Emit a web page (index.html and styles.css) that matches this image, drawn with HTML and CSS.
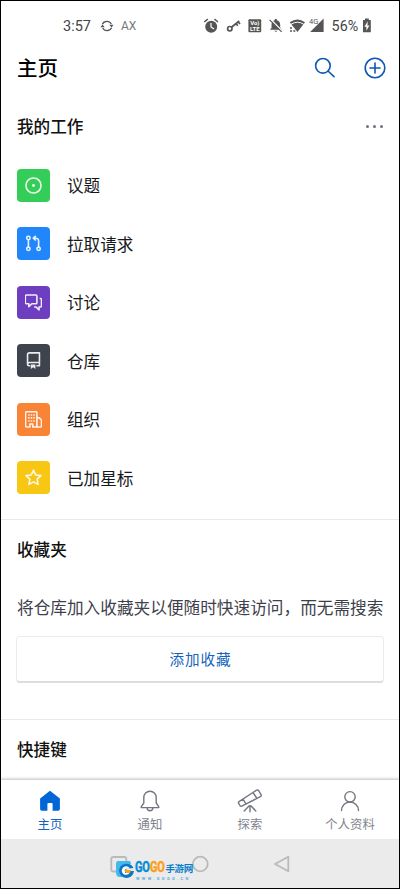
FILE: index.html
```html
<!DOCTYPE html>
<html lang="zh-CN">
<head>
<meta charset="utf-8">
<title>主页</title>
<link rel="stylesheet" href="styles.css">
</head>
<body>
<div class="phone">
  <div class="status">
    <span class="time">3:57</span>
    <svg class="sync" width="14" height="12" viewBox="0 0 14 12"><path d="M2.4 4.2A5 5 0 0 1 11.3 4M11.6 7.8A5 5 0 0 1 2.7 8" fill="none" stroke="#555" stroke-width="1.3"/><path d="M9.2 4.8h4.3L11.7 7.4zM.4 7.2h4.3L2.5 4.6z" fill="#555"/></svg>
    <span class="ax">AX</span>
    <svg class="sys" width="168" height="20" viewBox="204 16 168 20" fill="#555">
      <circle cx="211.2" cy="26.7" r="6"/><path d="M204.3 22l3.5-2.9M218 22l-3.5-2.9" stroke="#555" stroke-width="1.4"/><path d="M211 23v4l3 2" fill="none" stroke="#fff" stroke-width="1.2"/>
      <circle cx="229.8" cy="28.7" r="2.2" fill="none" stroke="#555" stroke-width="1.7"/><path d="M231.5 27.2l7.7-6.2M236 23.6l1.8 2.2M238.2 21.8l1.8 2.2" fill="none" stroke="#555" stroke-width="1.8"/>
      <rect x="248.4" y="19.2" width="12.8" height="13" rx="1"/>
      <text x="254.8" y="25.4" class="lte">Vo)</text><text x="254.8" y="31.3" class="lte">LTE</text>
      <path d="M269.8 29.7l1.7-1.7v-3.2c0-2.6 1.4-4 3.3-4.5v-1.2h2v1.2c2 .5 3.4 2.1 3.4 4.5V28l1.7 1.7zM274.3 30.7h3.2q-1.6 2.2-3.2 0z"/><path d="M270.6 19.2l11.5 11.8" stroke="#fff" stroke-width="1.4"/><path d="M269.6 19.9l12 12" stroke="#555" stroke-width="1.2"/>
      <path d="M289.7 22.3q7.8-5.6 15.3 0l-7.5 9.6z"/><path d="M291 24.3q6.5-4.2 12.8 0" fill="none" stroke="#fff" stroke-width="1"/><path d="M290 27.3h2v1.5h-2zM290 30.2h2v1.5h-2zM293.3 30.2h2v1.5h-2z"/>
      <path d="M323.6 18.5v13.6h-13.5z"/><text x="309" y="24" class="g4">4G</text>
      <text x="331.6" y="30.8" class="batt">56%</text>
      <path d="M363 20h2v-1.6h3.8V20h2v12.2H363z"/><path d="M367.8 21.3l-3.4 5.4h2v4.1l3-5.4h-2z" fill="#fff"/>
    </svg>
  </div>
  <header class="head">
    <h1>主页</h1>
    <svg class="search" width="22" height="22" viewBox="0 0 22 22"><circle cx="8.9" cy="8.8" r="7.3"/><path d="M14 14l6 5.7"/></svg>
    <svg class="plus" width="22" height="22" viewBox="0 0 22 22"><circle cx="11" cy="11" r="9.8"/><path d="M11 6v10M6 11h10"/></svg>
  </header>
  <main>
    <section class="work">
      <div class="title"><h2>我的工作</h2><span class="dots"><i></i><i></i><i></i></span></div>
      <ul>
        <li><span class="tile green"><svg viewBox="0 0 16 16"><circle cx="8" cy="8" r="7.1"/><circle cx="8" cy="8" r="1.4" class="solid"/></svg></span>议题</li>
        <li><span class="tile blue"><svg viewBox="0 0 16 16"><circle cx="3.2" cy="2.8" r="1.6"/><circle cx="3.2" cy="13" r="1.6"/><circle cx="12.8" cy="13" r="1.6"/><path d="M3.2 4.4v7M12.8 11.4V5.5a2.5 2.5 0 0 0-2.5-2.5H8M10.2.8L7.8 3l2.4 2.2"/></svg></span>拉取请求</li>
        <li><span class="tile purple"><svg viewBox="0 0 16 16"><path d="M1.3 1h8.9a1 1 0 0 1 1 1v6.2a1 1 0 0 1-1 1H6.4L3.6 12V9.2H1.3a1 1 0 0 1-1-1V2a1 1 0 0 1 1-1zM13.8 4.2h.7a1 1 0 0 1 1 1v6a1 1 0 0 1-1 1h-1.3V15l-2.8-2.8H8.6"/></svg></span>讨论</li>
        <li><span class="tile dark"><svg viewBox="0 0 16 16"><path d="M5 13H3.8A1.5 1.5 0 0 1 2.4 11.5V2.6A1.8 1.8 0 0 1 4.2.8h9.4V13h-2.8M2.5 11.3a1.7 1.7 0 0 1 1.7-1.4h9.2"/><path d="M5.5 11.7h4.3V16l-2.1-1.6L5.5 16z" class="solid"/></svg></span>仓库</li>
        <li><span class="tile orange"><svg viewBox="0 0 16 16"><path d="M4.6 15H1.5a1 1 0 0 1-1-1V1.7a1 1 0 0 1 1-1h8.7a1 1 0 0 1 1 1V15H7.3v-2.8H4.6zM11.2 6.5h2.3l2 2V14a1 1 0 0 1-1 1h-3.3"/><path d="M3 3.7h1.4M5.4 3.7h1.4M7.8 3.7h1.4M3 6.5h1.4M5.4 6.5h1.4M7.8 6.5h1.4M3 9.4h1.4M5.4 9.4h1.4M7.8 9.4h1.4"/></svg></span>组织</li>
        <li><span class="tile yellow"><svg viewBox="0 0 16 16"><path d="M8 1.1l2.1 4.5 4.9.6-3.6 3.4.9 4.9L8 12.1l-4.3 2.4.9-4.9L1 6.2l4.9-.6z"/></svg></span>已加星标</li>
      </ul>
    </section>
    <section class="favs">
      <div class="title"><h2>收藏夹</h2></div>
      <p>将仓库加入收藏夹以便随时快速访问，而无需搜索</p>
      <button>添加收藏</button>
    </section>
    <section class="keys"><div class="title"><h2>快捷键</h2></div></section>
  </main>
  <nav class="tabs">
    <a class="on"><svg viewBox="0 0 24 24"><path d="M12 1.7L2.1 9.6V20q0 1.7 1.7 1.7h5.6v-6.8q0-1 1-1h3.2q1 0 1 1v6.8h5.6q1.7 0 1.7-1.7V9.6z" class="home"/></svg><span>主页</span></a>
    <a><svg viewBox="0 0 24 24"><path d="M3.3 17.6L5.8 14V8.5a6.2 6.2 0 0 1 12.4 0V14l2.5 3.6c.4.6.1 1-.6 1H3.9c-.7 0-1-.4-.6-1zM9.2 19a2.8 2.8 0 0 0 5.6 0"/></svg><span>通知</span></a>
    <a><svg viewBox="0 0 24 24"><path d="M1 12.7L18.5 1.2q1.4-.8 2.2.5l2.3 4q.7 1.3-.7 2L3.8 17.2q-1.2.5-1.9-.7L.6 14.2q-.5-.9.4-1.5zM15 3.5l4 6M5 10.2l3 4.8M12 17v5.8M11.2 16.7l-5 5.2M12.8 16.7l5 5.2"/></svg><span>探索</span></a>
    <a><svg viewBox="0 0 24 24"><circle cx="12" cy="7.8" r="5.2"/><path d="M3.5 21.5a8.5 8.5 0 0 1 17 0"/></svg><span>个人资料</span></a>
  </nav>
  <div class="sysnav">
    <svg class="navicons" width="398" height="49" viewBox="1 839 398 49"><rect x="111.3" y="857" width="15" height="14.5" rx="2"/><circle cx="200.3" cy="864" r="7.4"/><path d="M275 864l13.3-7.3v14.6z"/></svg>
    <div class="brand">
      <svg width="20" height="19" viewBox="0 0 20 19"><path d="M3 1h12q1 1 1 3L9 5Q4 8 5 13t7 4H5q-4 0-4-4V4q0-3 2-3z" fill="#45b9ed"/><path d="M18.5 8Q16 3 10 4T4 11q1 7 8 7 6-1 7-7h-7l-2-2z" fill="#0878c8"/><path d="M15 8.6q-3-4-7-1-3 4 1 7 4 1 6-2l-5 .5V9z" fill="#fff"/><path d="M9 10h7l-1 3h-4z" fill="#ffa41b"/></svg>
      <div class="words"><div class="name"><b class="go">GO</b><b class="go2">GO</b><b class="cn">手游网</b></div><div class="url">WWW.GOGO.CN</div></div>
    </div>
  </div>
</div>
</body>
</html>
```
FILE: styles.css
```css
* { box-sizing: border-box; margin: 0; padding: 0; }
body {
  width: 400px; height: 889px; overflow: hidden; background: #fff; color: #16181c;
  font-family: Roboto, "Noto Sans CJK SC", sans-serif;
}
.phone { width: 400px; height: 889px; border: 1px solid #000; display: flex; flex-direction: column; overflow: hidden; }
.status { height: 50px; flex: none; display: flex; align-items: center; padding-left: 62px; color: #444; }
.time { font-size: 14.5px; width: 28px; }
.sync { margin-left: 9px; }
.ax { font-size: 12px; color: #777; margin-left: 7px; }
.sys { margin-left: auto; margin-right: 27px; }
.lte { font: bold 6px Roboto, sans-serif; fill: #fff; text-anchor: middle; }
.g4 { font: 7.5px Roboto, sans-serif; }
.batt { font: 14.3px Roboto, sans-serif; fill: #444; }
.head { height: 34px; flex: none; display: flex; align-items: center; padding: 0 13px 0 16px; }
h1 { font-size: 20.5px; line-height: 30px; font-weight: 500; color: #000; margin-right: auto; padding-top: 2px; }
.head svg { fill: none; stroke: #0d58b5; stroke-width: 1.6; stroke-linecap: round; }
.search { margin-right: 28px; }
main { flex: 1; min-height: 0; overflow: hidden; padding-top: 12px; }
.title { display: flex; align-items: center; justify-content: space-between; height: 59px; padding: 0 16px; }
h2 { font-size: 16.6px; line-height: 24px; font-weight: 500; color: #111; padding-top: 2px; }
.dots { display: flex; gap: 4px; }
.dots i { width: 3px; height: 3px; border-radius: 50%; background: #6d7280; }
.work { height: 422px; }
ul { list-style: none; }
li { height: 58.5px; display: flex; align-items: center; gap: 17px; padding-left: 16px; font-size: 16.6px; }
.tile { width: 33px; height: 33px; border-radius: 4px; display: flex; align-items: center; justify-content: center; }
.tile svg { width: 17px; height: 17px; fill: none; stroke: #fff; stroke-width: 1.5; stroke-linejoin: round; opacity: .9; }
.tile .solid { fill: #fff; stroke: none; }
.green { background: #34cd57; }
.blue { background: #2186fb; }
.purple { background: #6d3fc0; }
.dark { background: #3f434e; }
.orange { background: #fa8436; }
.yellow { background: #f7c713; }
.favs, .keys { border-top: 1px solid #e9e9ec; }
.favs { height: 200px; }
.favs p { height: 57px; padding: 17px 0 0 16px; font-size: 16.66px; line-height: 26px; white-space: nowrap; color: #3e414b; }
button {
  display: block; width: 368px; height: 47px; margin-left: 15px; padding: 0 0 2px 1px; background: #fff; border: 1px solid #ececee;
  border-bottom: 2px solid #dcdddf; border-radius: 4px; font: 14.6px Roboto, "Noto Sans CJK SC", sans-serif;
  letter-spacing: .9px; color: #1264bd;
}
.tabs { height: 59px; flex: none; display: flex; margin: 0 -1px; background: #fff; box-shadow: 0 -1px 3px rgba(0, 0, 0, .26); position: relative; clip-path: inset(-6px 1px 0); }
.tabs a { flex: 1; display: flex; flex-direction: column; align-items: center; padding-top: 9px; color: #81848d; font-size: 12.4px; line-height: 18px; }
.tabs svg { width: 24px; height: 24px; margin-bottom: 3px; fill: none; stroke: #737680; stroke-width: 1.4; stroke-linecap: round; stroke-linejoin: round; overflow: visible; }
.tabs .home { fill: #0366d6; stroke: none; }
.tabs .on { color: #1264bd; }
.sysnav { height: 49px; flex: none; background: #ebebeb; position: relative; }
.navicons { display: block; fill: none; stroke: #bababa; stroke-width: 1.8; stroke-linejoin: round; }
.brand { position: absolute; left: 114px; top: 21px; display: flex; }
.words { width: 58px; }
.name { display: flex; height: 17px; line-height: 15px; white-space: nowrap; }
.go, .go2 { width: 15.2px; font: bold 15px/15px Roboto, sans-serif; letter-spacing: -.3px; color: #078bd6; transform: scaleX(.73); transform-origin: left; -webkit-text-stroke: .5px; }
.go2 { color: #ff9d12; }
.cn { font: bold 9.5px/16px "Noto Sans CJK SC", sans-serif; color: #087dcb; letter-spacing: -.3px; }
.url { font: bold 4px/4px Roboto, sans-serif; letter-spacing: 2.35px; color: #5aaede; padding-left: 1px; white-space: nowrap; }
```
